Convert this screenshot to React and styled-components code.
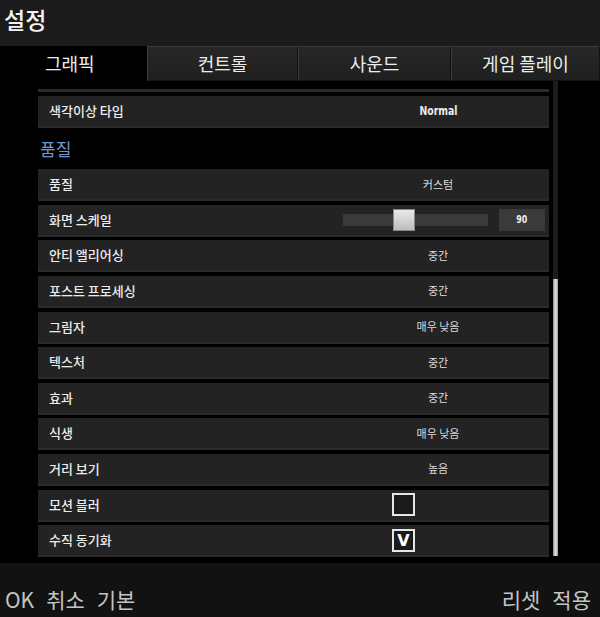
import React from 'react'
import styled, { createGlobalStyle } from 'styled-components'

const GlobalStyle = createGlobalStyle`
  body {
    margin: 0;
    background: #000;
    font-family: "Noto Sans CJK KR", "Noto Sans", sans-serif;
  }
`

const tabs = [
  { name: '그래픽', width: 109, active: true },
  { name: '컨트롤', width: 151 },
  { name: '사운드', width: 153 },
  { name: '게임 플레이', width: 149 },
]

const rows = [
  { label: '품질', value: '커스텀' },
  { label: '화면 스케일', slider: 90 },
  { label: '안티 앨리어싱', value: '중간' },
  { label: '포스트 프로세싱', value: '중간' },
  { label: '그림자', value: '매우 낮음' },
  { label: '텍스처', value: '중간' },
  { label: '효과', value: '중간' },
  { label: '식생', value: '매우 낮음' },
  { label: '거리 보기', value: '높음' },
  { label: '모션 블러', check: false },
  { label: '수직 동기화', check: true },
]

export default function App() {
  return (
    <Page>
      <GlobalStyle />
      <Header>설정</Header>
      <TabBar>
        {tabs.map(t => (
          <Tab key={t.name} width={t.width} active={t.active}>{t.name}</Tab>
        ))}
      </TabBar>
      <Body>
        <List>
          <RowEdge />
          <Row>
            <Label>색각이상 타입</Label>
            <Value><Latin>Normal</Latin></Value>
          </Row>
          <Section>품질</Section>
          {rows.map(r => (
            <Row key={r.label}>
              <Label>{r.label}</Label>
              {r.slider !== undefined ? (
                <SliderWrap>
                  <Track>
                    <Thumb />
                  </Track>
                  <NumBox><Latin small>{r.slider}</Latin></NumBox>
                </SliderWrap>
              ) : r.check !== undefined ? (
                <CheckWrap>
                  <Check>{r.check ? 'V' : ''}</Check>
                </CheckWrap>
              ) : (
                <Value>{r.value}</Value>
              )}
            </Row>
          ))}
        </List>
        <Scrollbar>
          <ScrollThumb />
        </Scrollbar>
      </Body>
      <Footer>
        <FootGroup>
          <span>OK</span>
          <span>취소</span>
          <span>기본</span>
        </FootGroup>
        <FootGroup>
          <span>리셋</span>
          <span>적용</span>
        </FootGroup>
      </Footer>
    </Page>
  )
}

const Page = styled.div`
  width: 600px;
  height: 617px;
  display: flex;
  flex-direction: column;
  background: #000;
  overflow: hidden;
`

const Header = styled.div`
  height: 46px;
  flex: none;
  background: #1b1b1b;
  color: #f2f2f2;
  font-size: 23px;
  font-weight: 500;
  line-height: 38px;
  padding-left: 4px;
  box-sizing: border-box;
`

const TabBar = styled.div`
  height: 35px;
  flex: none;
  display: flex;
  padding-left: 38px;
  background: #000;
`

const Tab = styled.div`
  width: ${p => p.width}px;
  flex: none;
  box-sizing: border-box;
  display: flex;
  align-items: center;
  justify-content: ${p => (p.active ? 'flex-start' : 'center')};
  padding-left: ${p => (p.active ? '7px' : '0')};
  padding-bottom: 2px;
  font-size: 18px;
  color: #ececec;
  background: ${p => (p.active ? '#000' : 'linear-gradient(#272727, #1f1f1f)')};
  border: ${p => (p.active ? 'none' : '1px solid #3a3a3a')};
  border-right-color: #111;
  border-bottom-color: #151515;
`

const Body = styled.div`
  height: 482px;
  flex: none;
  display: flex;
  background: #000;
`

const List = styled.div`
  width: 511px;
  margin-left: 38px;
  display: flex;
  flex-direction: column;
  gap: 3.6px;
`

const RowEdge = styled.div`
  height: 3px;
  margin-top: 8px;
  background: #2a2a2a;
`

const Row = styled.div`
  height: 32px;
  flex: none;
  display: flex;
  align-items: center;
  box-sizing: border-box;
  background: #232323;
  border-bottom: 2px solid #2b2b2b;
`

const Label = styled.div`
  flex: 1;
  padding-left: 11px;
  padding-bottom: 1px;
  font-size: 13px;
  font-weight: 500;
  color: #ededed;
`

const Value = styled.div`
  width: 222px;
  text-align: center;
  font-size: 11px;
  color: #dcdcdc;
  padding-bottom: 1px;
`

const Latin = styled.span`
  display: inline-block;
  font-family: "DejaVu Sans", sans-serif;
  font-weight: bold;
  font-size: ${p => (p.small ? '11px' : '13px')};
  color: #eee;
  transform: scaleX(0.72);
`

const Section = styled.div`
  height: 34.4px;
  flex: none;
  padding-left: 2px;
  font-size: 17px;
  line-height: 24px;
  padding-top: 6px;
  box-sizing: border-box;
  color: #6b9bd4;
`

const SliderWrap = styled.div`
  width: 222px;
  display: flex;
  align-items: center;
  padding-left: 16px;
  gap: 11px;
  box-sizing: border-box;
`

const Track = styled.div`
  width: 145px;
  height: 12px;
  background: #3a3a3a;
  position: relative;
`

const Thumb = styled.div`
  position: absolute;
  left: 50px;
  top: -5px;
  width: 22px;
  height: 22px;
  box-sizing: border-box;
  border: 1px solid #888;
  background: linear-gradient(#eaeaea, #bdbdbd);
`

const NumBox = styled.div`
  width: 46px;
  height: 22px;
  background: #3a3a3a;
  display: flex;
  align-items: center;
  justify-content: center;
`

const CheckWrap = styled.div`
  width: 222px;
  padding-left: 65px;
  box-sizing: border-box;
  display: flex;
  align-items: center;
`

const Check = styled.div`
  width: 23px;
  height: 23px;
  box-sizing: border-box;
  border: 2px solid #e6e6e6;
  background: #1a1a1a;
  color: #fff;
  font-family: "DejaVu Sans", sans-serif;
  font-weight: bold;
  font-size: 16px;
  line-height: 19px;
  text-align: center;
`

const Scrollbar = styled.div`
  width: 5px;
  height: 475px;
  margin-left: 4px;
  background: #1c1c1c;
  display: flex;
  flex-direction: column;
  justify-content: flex-end;
`

const ScrollThumb = styled.div`
  height: 277px;
  width: 5px;
  background: linear-gradient(90deg, #8a8a8a, #e2e2e2 50%, #9a9a9a);
`

const Footer = styled.div`
  flex: 1;
  background: #121212;
  display: flex;
  justify-content: space-between;
  align-items: flex-end;
  padding: 0 9px 3px 5px;
  color: #c4c4c4;
  font-size: 21px;
`

const FootGroup = styled.div`
  display: flex;
  gap: 12px;
`
